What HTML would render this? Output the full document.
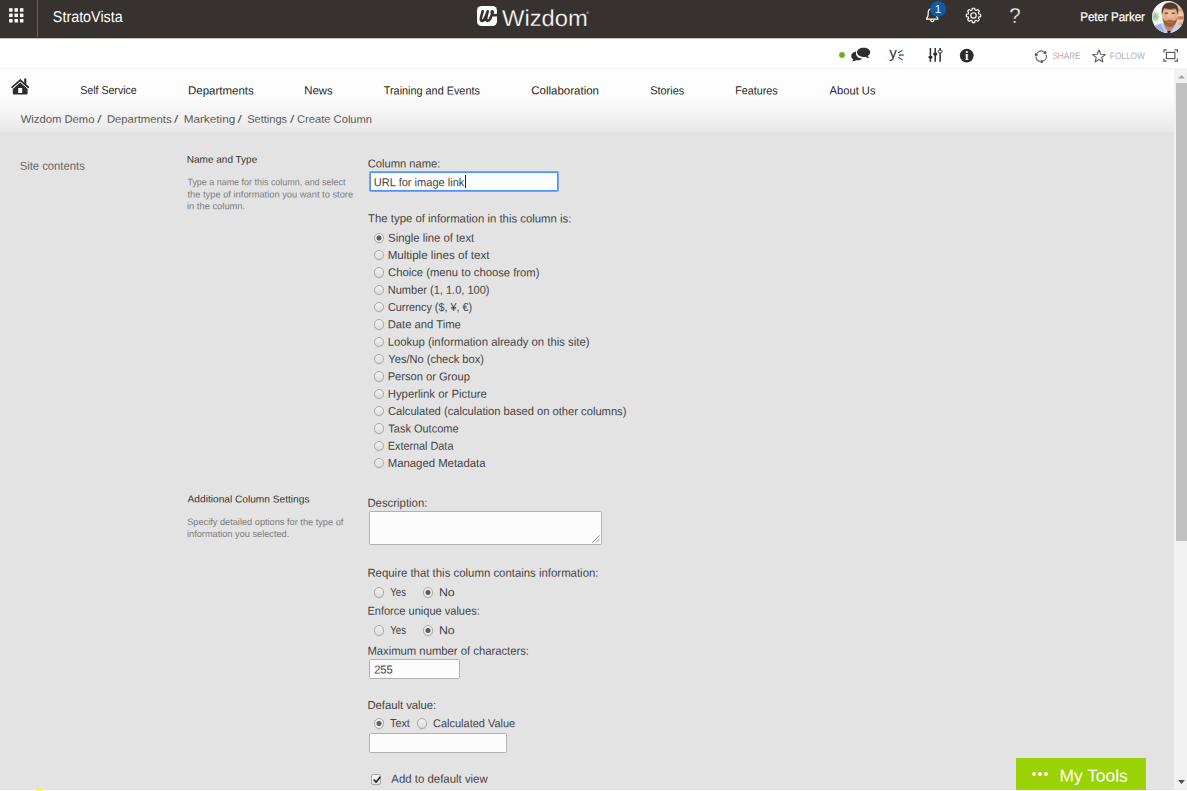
<!DOCTYPE html>
<html lang="en">
<head>
<meta charset="utf-8">
<title>Create Column</title>
<style>
*{box-sizing:border-box;margin:0;padding:0}
html,body{width:1187px;height:791px;overflow:hidden;background:#e3e3e3}
body{font-family:"Liberation Sans",Arial,sans-serif;font-size:11.6px;color:#444}
#page{position:relative;width:1187px;height:791px;overflow:hidden;background:#e3e3e3}
#page>*{position:absolute}
header,nav,main,aside,#ribbon,#crumbs{left:0;top:0;width:0;height:0}
.t{position:absolute;left:0;top:0;display:block;white-space:nowrap;line-height:1;transform-origin:0 0;text-decoration:none;z-index:5}
.bg{position:absolute}
#suite::before{content:"";position:absolute;left:0;top:0;width:1187px;height:38px;background:#37322f;border-bottom:1px solid #1c1816}
.vsep{position:absolute;left:36.9px;top:0;width:1.3px;height:37px;background:#67625f}
#ribbon::before{content:"";position:absolute;left:0;top:38px;width:1187px;height:30px;background:linear-gradient(#c4c3c2 0,#c4c3c2 0.6px,#fff 1px,#fff 100%)}
#topnav::before{content:"";position:absolute;left:0;top:68px;width:1174px;height:64px;background:linear-gradient(#f4f4f4 0,#f4f4f4 1px,#fefefe 1px,#fdfdfd 40%,#f4f4f4 70%,#e8e8e8 100%)}
svg{position:absolute;overflow:visible}
.inp{position:absolute;background:#fcfcfc;border:1px solid #b1b1b1;border-radius:1.5px;z-index:2}
.inp.focus{border:1px solid #4d90fe;box-shadow:0 0 0 1px rgba(77,144,254,.75);border-radius:1px;background:#fdfdfd}
.caret{position:absolute;top:1.6px;width:1px;height:13.6px;background:#222}
.rd{position:absolute;width:10.5px;height:10.5px;border-radius:50%;border:1.15px solid #aaaaaa;background:linear-gradient(#f0f0f0 10%,#dedede 90%);box-shadow:0 0.4px 0.6px rgba(0,0,0,.12);z-index:3}
.rd.on{background:radial-gradient(circle at 50% 50%,#5e5e5e 0,#5e5e5e 2.1px,#efefef 3px,#e9e9e9 100%)}
.cb{position:absolute;width:10.3px;height:10.3px;border:1px solid #a6a6a6;border-radius:2px;background:linear-gradient(#f6f6f6,#e4e4e4);z-index:3}
#mytools{left:1016px;top:758px;width:130px;height:32px;background:#9bd204;z-index:4}
#mytools .dot{position:absolute;top:13.6px;width:4.4px;height:4.4px;border-radius:50%;background:#fff}
#vscroll{left:1174px;top:68px;width:13px;height:722px;background:#f1f1f1;z-index:6}
#vscroll .thumb{position:absolute;left:2px;top:15px;width:11px;height:458px;background:#c1c1c1}
#botline{left:0;top:790px;width:1187px;height:1px;background:#fbfbfb;z-index:7}
#botline i{position:absolute;left:36px;top:0;width:7px;height:1px;background:#ffff00}
.logo-word{-webkit-text-stroke:0.28px #37322f}
.help{-webkit-text-stroke:0.4px #37322f}
.user{-webkit-text-stroke:0.25px #fff}

</style>
</head>
<body>
<div id="page">

<header id="suite">
  <svg style="left:8.5px;top:7.6px" width="15" height="15" viewBox="0 0 15 15" ><rect x="0.1" y="0.2" width="3.5" height="3.5" fill="#fff"/><rect x="5.5" y="0.2" width="3.5" height="3.5" fill="#fff"/><rect x="10.9" y="0.2" width="3.5" height="3.5" fill="#fff"/><rect x="0.1" y="5.6" width="3.5" height="3.5" fill="#fff"/><rect x="5.5" y="5.6" width="3.5" height="3.5" fill="#fff"/><rect x="10.9" y="5.6" width="3.5" height="3.5" fill="#fff"/><rect x="0.1" y="11.0" width="3.5" height="3.5" fill="#fff"/><rect x="5.5" y="11.0" width="3.5" height="3.5" fill="#fff"/><rect x="10.9" y="11.0" width="3.5" height="3.5" fill="#fff"/></svg>
  <div class="vsep"></div>
  <svg style="left:477px;top:6px" width="20" height="20" viewBox="0 0 20 20" ><rect x="0" y="0" width="20" height="20" rx="4.6" fill="#fff"/><path d="M5.7 5.4 C4.9 8.2 3.5 11.8 3.9 13.7 C4.3 15.5 6.3 15.2 7.5 13.0 C8.7 10.8 10.0 7.6 10.7 5.4 C9.9 8.2 8.9 11.6 9.3 13.5 C9.7 15.4 11.9 15.2 13.1 12.8 C14.3 10.4 15.6 7.8 15.7 6.0 C15.7 5.1 14.8 5.2 14.7 6.2 C14.4 8.6 16.4 9.8 19.9 9.0" fill="none" stroke="#37322f" stroke-width="2.7" stroke-linecap="round" stroke-linejoin="round"/></svg>
  <svg style="left:924px;top:0px" width="24" height="26" viewBox="0 0 24 26" ><path d="M2.6 19.2 L13.9 19.2 L13.9 18.4 C12.6 17.4 12.3 16 12.3 14 L12.3 12.6 C12.3 9.8 10.6 8.6 8.2 8.6 C5.8 8.6 4.2 9.8 4.2 12.6 L4.2 14 C4.2 16 3.9 17.4 2.6 18.4 Z" fill="none" stroke="#fff" stroke-width="1.2" stroke-linejoin="round"/><path d="M6.6 19.6 C6.8 22.4 9.7 22.4 9.9 19.6" fill="none" stroke="#fff" stroke-width="1.2"/><circle cx="14.1" cy="8.9" r="7.9" fill="#0a5ca8"/><text x="14.0" y="12.7" text-anchor="middle" font-family="Liberation Sans, sans-serif" font-size="11.6" fill="#fff">1</text></svg>
  <svg style="left:964px;top:6px" width="20" height="20" viewBox="0 0 20 20" ><path d="M16.70 8.20 L16.70 10.60 L14.91 10.84 L14.34 12.21 L15.44 13.64 L13.74 15.34 L12.31 14.24 L10.94 14.81 L10.70 16.60 L8.30 16.60 L8.06 14.81 L6.69 14.24 L5.26 15.34 L3.56 13.64 L4.66 12.21 L4.09 10.84 L2.30 10.60 L2.30 8.20 L4.09 7.96 L4.66 6.59 L3.56 5.16 L5.26 3.46 L6.69 4.56 L8.06 3.99 L8.30 2.20 L10.70 2.20 L10.94 3.99 L12.31 4.56 L13.74 3.46 L15.44 5.16 L14.34 6.59 L14.91 7.96 Z" fill="none" stroke="#fff" stroke-width="1.15" stroke-linejoin="round"/><circle cx="9.5" cy="9.4" r="2.7" fill="none" stroke="#fff" stroke-width="1.15"/></svg>
  
  <svg style="left:1152.1px;top:0.7px" width="32" height="32" viewBox="0 0 32 32" ><defs><clipPath id="avc"><circle cx="16" cy="16" r="16"/></clipPath><linearGradient id="avg" x1="0" y1="0" x2="1" y2="0"><stop offset="0" stop-color="#f7f9f9"/><stop offset="0.72" stop-color="#f7f9f9"/><stop offset="0.8" stop-color="#eccbb2"/><stop offset="1" stop-color="#e9c3a8"/></linearGradient><radialGradient id="avgr" cx="0.5" cy="0.5" r="0.5"><stop offset="0" stop-color="#86c38a"/><stop offset="0.55" stop-color="#b4dab7"/><stop offset="1" stop-color="#f2f8f3" stop-opacity="0"/></radialGradient></defs><g clip-path="url(#avc)"><rect x="0" y="0" width="32" height="32" fill="url(#avg)"/><ellipse cx="3.4" cy="15.6" rx="5" ry="6.4" fill="url(#avgr)"/><rect x="26" y="15.6" width="8" height="2.6" fill="#cf7f56" stroke="#cf7f56" stroke-width="1.4" stroke-opacity="0.45" stroke-linejoin="round"/><rect x="26.4" y="8.2" width="8" height="2" fill="#dc9c78" stroke="#dc9c78" stroke-width="1.2" stroke-opacity="0.45" stroke-linejoin="round"/><rect x="26.4" y="21.8" width="8" height="1.8" fill="#dca182" stroke="#dca182" stroke-width="1.2" stroke-opacity="0.45" stroke-linejoin="round"/><path d="M-2 34 L-2 27 C3 24 8 22.8 12 22.2 L22 22.6 C26 23.4 29 25 34 28.6 L34 34 Z" fill="#c6d1f5" stroke="#c6d1f5" stroke-width="1.2" stroke-opacity="0.5" stroke-linejoin="round"/><path d="M-2 34 L-2 27.4 C2 25 5.4 23.8 8.8 23.4 L12.6 31.6 L4 34 Z" fill="#a4b1ea" stroke="#a4b1ea" stroke-width="1.4" stroke-opacity="0.4" stroke-linejoin="round"/><path d="M12.6 20 L22 20 L21.4 26.8 L17 31.2 L13 26.8 Z" fill="#c98c68" stroke="#c98c68" stroke-width="1.2" stroke-opacity="0.45" stroke-linejoin="round"/><ellipse cx="17.9" cy="14.8" rx="7.3" ry="9.9" fill="#e6ad86" stroke="#e6ad86" stroke-width="1.4" stroke-opacity="0.45" stroke-linejoin="round"/><ellipse cx="18.4" cy="12.8" rx="4.4" ry="3.4" fill="#efbe98" stroke="#efbe98" stroke-width="1.8" stroke-opacity="0.4" stroke-linejoin="round"/><path d="M10.9 17.4 C11.2 22.8 14 25.7 17.8 25.7 C21.6 25.7 24.5 22.8 24.9 17.4 C23.8 19.8 22.5 20.5 21 19.8 C19 19.2 16.6 19.2 14.8 19.8 C13.2 20.5 11.9 19.8 10.9 17.4 Z" fill="#99623f" stroke="#99623f" stroke-width="1.4" stroke-opacity="0.4" stroke-linejoin="round"/><path d="M15 20.8 C16.6 21.6 19.2 21.6 20.8 20.8 C19.8 22.2 16 22.2 15 20.8 Z" fill="#cd8874" stroke="#cd8874" stroke-width="0.8" stroke-opacity="0.4" stroke-linejoin="round"/><path d="M10.1 13 C9 6.4 12.2 1.5 18.2 1.7 C24.2 1.9 27.4 5.8 25.7 13.2 C25.3 10.6 24.6 8.8 23.5 7.6 C20.4 8.4 15 8.2 12.5 7 C11.2 8.4 10.5 10.4 10.1 13 Z" fill="#543829" stroke="#543829" stroke-width="1.3" stroke-opacity="0.45" stroke-linejoin="round"/><path d="M13 11.8 H16 V12.7 H13 Z M19.8 11.8 H22.8 V12.7 H19.8 Z" fill="#6b4735" stroke="#6b4735" stroke-width="1.0" stroke-opacity="0.35" stroke-linejoin="round"/><path d="M15.6 30 L18.4 30 L18 34 L16 34 Z" fill="#1f2640" stroke="#1f2640" stroke-width="1.0" stroke-opacity="0.4" stroke-linejoin="round"/></g></svg>
<span class="t brand" style="font-size:15.6px;color:#ffffff;transform:translate(52.85px,9.18px) rotate(0.03deg) scaleX(0.9194)">StratoVista</span>
<span class="t logo-word" style="font-size:23px;color:#ffffff;transform:translate(502.00px,6.90px) rotate(0.03deg) scaleX(1.0317)">Wizdom</span>
<span class="t reg" style="font-size:4px;color:#e0e0e0;transform:translate(586.35px,10.85px) rotate(0.03deg) scaleX(0.9155)">®</span>
<span class="t user" style="font-size:12.5px;color:#ffffff;transform:translate(1080.28px,11.00px) rotate(0.03deg) scaleX(0.9217)">Peter Parker</span>
<span class="t help" style="font-size:21.5px;color:#ffffff;transform:translate(1009.18px,5.94px) rotate(0.03deg) scaleX(0.9496)">?</span>
</header>

<div id="ribbon">
  <svg style="left:839.1px;top:51.7px" width="6" height="6" viewBox="0 0 6 6" ><circle cx="3" cy="3" r="2.9" fill="#6bb417"/></svg>
  <svg style="left:850px;top:47px" width="21" height="15" viewBox="0 0 21 15" ><path d="M6.2 4.6 C3.4 5 1.2 6.8 1.2 9 C1.2 10.4 2 11.6 3.4 12.4 C3.2 13.2 2.6 13.9 1.9 14.4 C3.6 14.4 5 13.8 5.9 13.2 C8.6 13.6 11.2 12.8 12.4 11.4 C9 11.4 6 9.4 6 6.4 C6 5.8 6.06 5.2 6.2 4.6 Z" fill="#2f2f2f"/><path d="M13.6 0.7 C9.8 0.7 7 2.7 7 5.3 C7 7.9 9.8 9.9 13.6 9.9 C14.3 9.9 15 9.84 15.6 9.7 C16.4 10.4 17.6 11 19.2 11.1 C18.5 10.5 18 9.7 17.9 8.8 C19.3 8 20.2 6.7 20.2 5.3 C20.2 2.7 17.4 0.7 13.6 0.7 Z" fill="#2f2f2f"/></svg>
  <svg style="left:888px;top:46px" width="18" height="18" viewBox="0 0 18 18" ><text x="1.2" y="12" font-family="Liberation Sans, sans-serif" font-size="14.5" fill="#2f2f2f" textLength="7.6" lengthAdjust="spacingAndGlyphs">y</text><path d="M10.6 6.6 L14 4.6 M11.2 9.1 L15.4 9 M10.6 11.4 L14 13.6" stroke="#2f2f2f" stroke-width="1.1" stroke-linecap="round" fill="none"/></svg>
  <svg style="left:927px;top:47px" width="17" height="16" viewBox="0 0 17 16" ><path d="M3.4 1 V14.7 M8.2 1 V14.7 M13.1 1 V14.7" stroke="#2f2f2f" stroke-width="1.5" fill="none"/><rect x="1.5" y="8.9" width="3.9" height="2.7" rx="0.8" fill="#2f2f2f"/><rect x="6.3" y="5.8" width="3.9" height="2.7" rx="0.8" fill="#2f2f2f"/><rect x="11.1" y="3.2" width="4" height="2.6" rx="0.8" fill="#fff" stroke="#2f2f2f" stroke-width="0.9"/></svg>
  <svg style="left:959px;top:48px" width="16" height="16" viewBox="0 0 16 16" ><circle cx="7.75" cy="7.6" r="6.9" fill="#2b2b2b"/><text x="7.8" y="11.9" text-anchor="middle" font-family="Liberation Serif, serif" font-size="12.5" font-weight="700" fill="#fff">i</text></svg>
  <svg style="left:1034px;top:49px" width="15" height="15" viewBox="0 0 15 15" ><path d="M3.1 4.2 A5.2 5.2 0 0 1 9.4 2.4 M12.1 5.6 A5.2 5.2 0 0 1 9.3 12 M6.3 12.4 A5.2 5.2 0 0 1 1.9 7.4" fill="none" stroke="#5f5f5f" stroke-width="1.1"/><circle cx="11" cy="3.6" r="1.55" fill="#5f5f5f"/><circle cx="7.8" cy="12.5" r="1.55" fill="#5f5f5f"/><circle cx="2.2" cy="5.6" r="1.55" fill="#5f5f5f"/></svg>
  <svg style="left:1092px;top:49px" width="15" height="15" viewBox="0 0 15 15" ><path d="M7.00 1.00 L8.70 5.25 L13.28 5.56 L9.76 8.50 L10.88 12.94 L7.00 10.50 L3.12 12.94 L4.24 8.50 L0.72 5.56 L5.30 5.25 Z" fill="none" stroke="#5f5f5f" stroke-width="1.1" stroke-linejoin="round"/></svg>
  <svg style="left:1163px;top:49px" width="16" height="13" viewBox="0 0 16 13" ><path d="M0.9 3.6 V0.9 H3.8 M11.4 0.9 H14.4 V3.6 M14.4 9.4 V12.1 H11.4 M3.8 12.1 H0.9 V9.4" fill="none" stroke="#5f5f5f" stroke-width="1.2"/><rect x="3.4" y="3.4" width="8.5" height="6.2" fill="none" stroke="#5f5f5f" stroke-width="1.2"/></svg>
<span class="t" style="font-size:9.3px;color:#b0b0b0;transform:translate(1052.43px,52.40px) rotate(0.03deg) scaleX(0.8773)">SHARE</span>
<span class="t" style="font-size:9.3px;color:#b0b0b0;transform:translate(1109.84px,52.40px) rotate(0.03deg) scaleX(0.8926)">FOLLOW</span>
</div>

<nav id="topnav">
  <svg style="left:11px;top:78px" width="18" height="17" viewBox="0 0 18 17" ><path d="M9.2 2.2 L1.2 9.2 M9.2 2.2 L17.2 9.2" stroke="#2c2c2c" stroke-width="1.7" stroke-linecap="square" fill="none"/><path d="M13.2 0.4 H15.3 V6.4 L13.2 4.6 Z" fill="#2c2c2c"/><path d="M9.2 4.5 L16.6 10.9 V15.3 Q16.6 16.6 15.3 16.6 H3.1 Q1.8 16.6 1.8 15.3 V10.9 Z M7.2 10.1 V15 H11.2 V10.1 Z" fill="#2c2c2c" fill-rule="evenodd"/></svg>
<a class="t" style="font-size:11.5px;color:#262626;transform:translate(80.22px,85.37px) rotate(0.03deg) scaleX(0.9210)">Self Service</a>
<a class="t" style="font-size:11.5px;color:#262626;transform:translate(187.98px,85.37px) rotate(0.03deg) scaleX(0.9983)">Departments</a>
<a class="t" style="font-size:11.5px;color:#262626;transform:translate(304.19px,85.37px) rotate(0.03deg) scaleX(0.9879)">News</a>
<a class="t" style="font-size:11.5px;color:#262626;transform:translate(383.78px,85.37px) rotate(0.03deg) scaleX(0.9435)">Training and Events</a>
<a class="t" style="font-size:11.5px;color:#262626;transform:translate(531.22px,85.37px) rotate(0.03deg) scaleX(1.0002)">Collaboration</a>
<a class="t" style="font-size:11.5px;color:#262626;transform:translate(650.21px,85.37px) rotate(0.03deg) scaleX(0.9492)">Stories</a>
<a class="t" style="font-size:11.5px;color:#262626;transform:translate(735.24px,85.37px) rotate(0.03deg) scaleX(0.9351)">Features</a>
<a class="t" style="font-size:11.5px;color:#262626;transform:translate(829.60px,85.37px) rotate(0.03deg) scaleX(0.9701)">About Us</a>
</nav>
<div id="crumbs">
<a class="t" style="font-size:10.8px;color:#595959;transform:translate(20.70px,113.85px) rotate(0.03deg) scaleX(1.0417)">Wizdom Demo</a>
<span class="t" style="font-size:10.8px;color:#595959;transform:translate(97.30px,113.85px) rotate(0.03deg) scaleX(1.4220)">/</span>
<a class="t" style="font-size:10.8px;color:#595959;transform:translate(106.90px,113.85px) rotate(0.03deg) scaleX(1.0465)">Departments</a>
<span class="t" style="font-size:10.8px;color:#595959;transform:translate(174.00px,113.85px) rotate(0.03deg) scaleX(1.4220)">/</span>
<a class="t" style="font-size:10.8px;color:#595959;transform:translate(183.66px,113.85px) rotate(0.03deg) scaleX(1.0873)">Marketing</a>
<span class="t" style="font-size:10.8px;color:#595959;transform:translate(237.50px,113.85px) rotate(0.03deg) scaleX(1.4220)">/</span>
<a class="t" style="font-size:10.8px;color:#595959;transform:translate(247.20px,113.85px) rotate(0.03deg) scaleX(1.0220)">Settings</a>
<span class="t" style="font-size:10.8px;color:#595959;transform:translate(290.00px,113.85px) rotate(0.03deg) scaleX(1.4220)">/</span>
<span class="t" style="font-size:10.8px;color:#595959;transform:translate(297.04px,113.85px) rotate(0.03deg) scaleX(1.0332)">Create Column</span>
</div>

<aside id="side">
<a class="t" style="font-size:11.5px;color:#666666;transform:translate(19.69px,160.67px) rotate(0.03deg) scaleX(0.9792)">Site contents</a>
</aside>

<main id="form">
<span class="t h" style="font-size:10px;color:#333333;transform:translate(186.80px,154.66px) rotate(0.03deg) scaleX(1.0002)">Name and Type</span>
<span class="t" style="font-size:9.4px;color:#7c7c7c;transform:translate(187.42px,177.17px) rotate(0.03deg) scaleX(0.9534)">Type a name for this column, and select</span>
<span class="t" style="font-size:9.4px;color:#7c7c7c;transform:translate(187.46px,189.47px) rotate(0.03deg) scaleX(0.9935)">the type of information you want to store</span>
<span class="t" style="font-size:9.4px;color:#7c7c7c;transform:translate(186.99px,201.27px) rotate(0.03deg) scaleX(0.9968)">in the column.</span>
<span class="t" style="font-size:11.6px;color:#444444;transform:translate(367.74px,157.54px) rotate(0.03deg) scaleX(0.9643)">Column name:</span>
<span class="t" style="font-size:11.6px;color:#444444;transform:translate(373.87px,176.14px) rotate(0.03deg) scaleX(0.9535)">URL for image link</span>
<span class="t" style="font-size:11.6px;color:#444444;transform:translate(368.07px,212.34px) rotate(0.03deg) scaleX(0.9799)">The type of information in this column is:</span>
  <div class="inp focus" style="left:370px;top:172.3px;width:188.4px;height:18.4px"><i class="caret" style="left:93.8px"></i></div>
<span class="rd on" style="left:373.75px;top:232.55px"></span>
<span class="rd" style="left:373.75px;top:249.89px"></span>
<span class="rd" style="left:373.75px;top:267.23px"></span>
<span class="rd" style="left:373.75px;top:284.57px"></span>
<span class="rd" style="left:373.75px;top:301.91px"></span>
<span class="rd" style="left:373.75px;top:319.25px"></span>
<span class="rd" style="left:373.75px;top:336.59px"></span>
<span class="rd" style="left:373.75px;top:353.93px"></span>
<span class="rd" style="left:373.75px;top:371.27px"></span>
<span class="rd" style="left:373.75px;top:388.61px"></span>
<span class="rd" style="left:373.75px;top:405.95px"></span>
<span class="rd" style="left:373.75px;top:423.29px"></span>
<span class="rd" style="left:373.75px;top:440.63px"></span>
<span class="rd" style="left:373.75px;top:457.97px"></span>
<label class="t" style="font-size:11.6px;color:#444444;transform:translate(388.09px,231.64px) rotate(0.03deg) scaleX(0.9751)">Single line of text</label>
<label class="t" style="font-size:11.6px;color:#444444;transform:translate(387.67px,248.98px) rotate(0.03deg) scaleX(1.0009)">Multiple lines of text</label>
<label class="t" style="font-size:11.6px;color:#444444;transform:translate(388.04px,266.32px) rotate(0.03deg) scaleX(0.9711)">Choice (menu to choose from)</label>
<label class="t" style="font-size:11.6px;color:#444444;transform:translate(387.72px,283.66px) rotate(0.03deg) scaleX(0.9514)">Number (1, 1.0, 100)</label>
<label class="t" style="font-size:11.6px;color:#444444;transform:translate(388.06px,301.00px) rotate(0.03deg) scaleX(0.9304)">Currency ($, ¥, €)</label>
<label class="t" style="font-size:11.6px;color:#444444;transform:translate(387.70px,318.34px) rotate(0.03deg) scaleX(0.9698)">Date and Time</label>
<label class="t" style="font-size:11.6px;color:#444444;transform:translate(387.69px,335.68px) rotate(0.03deg) scaleX(0.9789)">Lookup (information already on this site)</label>
<label class="t" style="font-size:11.6px;color:#444444;transform:translate(388.38px,353.02px) rotate(0.03deg) scaleX(0.9542)">Yes/No (check box)</label>
<label class="t" style="font-size:11.6px;color:#444444;transform:translate(387.71px,370.36px) rotate(0.03deg) scaleX(0.9579)">Person or Group</label>
<label class="t" style="font-size:11.6px;color:#444444;transform:translate(387.69px,387.70px) rotate(0.03deg) scaleX(0.9799)">Hyperlink or Picture</label>
<label class="t" style="font-size:11.6px;color:#444444;transform:translate(388.04px,405.04px) rotate(0.03deg) scaleX(0.9633)">Calculated (calculation based on other columns)</label>
<label class="t" style="font-size:11.6px;color:#444444;transform:translate(388.38px,422.38px) rotate(0.03deg) scaleX(0.9465)">Task Outcome</label>
<label class="t" style="font-size:11.6px;color:#444444;transform:translate(387.73px,439.72px) rotate(0.03deg) scaleX(0.9352)">External Data</label>
<label class="t" style="font-size:11.6px;color:#444444;transform:translate(387.69px,457.06px) rotate(0.03deg) scaleX(0.9790)">Managed Metadata</label>
<span class="t h" style="font-size:10px;color:#333333;transform:translate(187.60px,494.36px) rotate(0.03deg) scaleX(1.0149)">Additional Column Settings</span>
<span class="t" style="font-size:9.4px;color:#7c7c7c;transform:translate(187.18px,517.07px) rotate(0.03deg) scaleX(0.9825)">Specify detailed options for the type of</span>
<span class="t" style="font-size:9.4px;color:#7c7c7c;transform:translate(187.00px,529.07px) rotate(0.03deg) scaleX(0.9809)">information you selected.</span>
<span class="t" style="font-size:11.6px;color:#444444;transform:translate(367.39px,496.84px) rotate(0.03deg) scaleX(0.9798)">Description:</span>
<span class="t" style="font-size:11.6px;color:#444444;transform:translate(367.39px,566.74px) rotate(0.03deg) scaleX(0.9825)">Require that this column contains information:</span>
<label class="t" style="font-size:11.6px;color:#444444;transform:translate(390.31px,586.14px) rotate(0.03deg) scaleX(0.8313)">Yes</label>
<label class="t" style="font-size:11.6px;color:#444444;transform:translate(438.91px,586.14px) rotate(0.03deg) scaleX(1.0653)">No</label>
<span class="t" style="font-size:11.6px;color:#444444;transform:translate(367.42px,604.74px) rotate(0.03deg) scaleX(0.9521)">Enforce unique values:</span>
<label class="t" style="font-size:11.6px;color:#444444;transform:translate(390.31px,624.24px) rotate(0.03deg) scaleX(0.8313)">Yes</label>
<label class="t" style="font-size:11.6px;color:#444444;transform:translate(438.91px,624.24px) rotate(0.03deg) scaleX(1.0653)">No</label>
<span class="t" style="font-size:11.6px;color:#444444;transform:translate(367.40px,644.64px) rotate(0.03deg) scaleX(0.9722)">Maximum number of characters:</span>
<span class="t" style="font-size:11.6px;color:#444444;transform:translate(374.14px,663.44px) rotate(0.03deg) scaleX(0.9619)">255</span>
<span class="t" style="font-size:11.6px;color:#444444;transform:translate(367.40px,699.04px) rotate(0.03deg) scaleX(0.9712)">Default value:</span>
<label class="t" style="font-size:11.6px;color:#444444;transform:translate(390.09px,717.24px) rotate(0.03deg) scaleX(0.9234)">Text</label>
<label class="t" style="font-size:11.6px;color:#444444;transform:translate(433.05px,717.24px) rotate(0.03deg) scaleX(0.9466)">Calculated Value</label>
<label class="t" style="font-size:11.6px;color:#444444;transform:translate(391.30px,772.74px) rotate(0.03deg) scaleX(0.9842)">Add to default view</label>
  <div class="inp ta" style="left:369px;top:511.3px;width:233px;height:34px"><svg style="right:1px;bottom:1px" width="9" height="9" viewBox="0 0 9 9"><path d="M8.5 1.5 L1.5 8.5 M8.5 5 L5 8.5" stroke="#777" stroke-width="0.9" fill="none"/></svg></div>
<span class="rd" style="left:373.75px;top:587.25px"></span>
<span class="rd on" style="left:422.75px;top:587.25px"></span>
<span class="rd" style="left:373.75px;top:625.35px"></span>
<span class="rd on" style="left:422.75px;top:625.35px"></span>
<span class="rd on" style="left:373.75px;top:718.35px"></span>
<span class="rd" style="left:416.85px;top:718.35px"></span>
  <div class="inp" style="left:369px;top:659px;width:91px;height:19.5px"></div>
  <div class="inp" style="left:369px;top:733.2px;width:138px;height:19.5px"></div>
  <span class="cb" style="left:371.2px;top:774.4px"><svg style="left:0.6px;top:0.4px" width="8" height="8" viewBox="0 0 8 8"><path d="M1.2 4 L3.1 6.2 L6.9 1.2" stroke="#2a2a2a" stroke-width="1.7" fill="none" stroke-linecap="round" stroke-linejoin="round"/></svg></span>
</main>

<div id="mytools"><i class="dot" style="left:16px"></i><i class="dot" style="left:22px"></i><i class="dot" style="left:28px"></i></div>
<span class="t" style="font-size:17.2px;color:#ffffff;transform:translate(1059.40px,767.60px) rotate(0.03deg) scaleX(1.0139)">My Tools</span>

<div id="vscroll">
  <svg class="ar" style="left:4px;top:6.7px" width="7" height="3.4" viewBox="0 0 7 3.4"><path d="M0 3.4 L3.5 0 L7 3.4 Z" fill="#a3a3a3"/></svg>
  <div class="thumb"></div>
  <svg class="ar" style="left:4px;top:712px" width="7" height="4" viewBox="0 0 7 4"><path d="M0 0 L3.5 4 L7 0 Z" fill="#505050"/></svg>
</div>
<div id="botline"><i></i></div>
</div>
</body>
</html>
